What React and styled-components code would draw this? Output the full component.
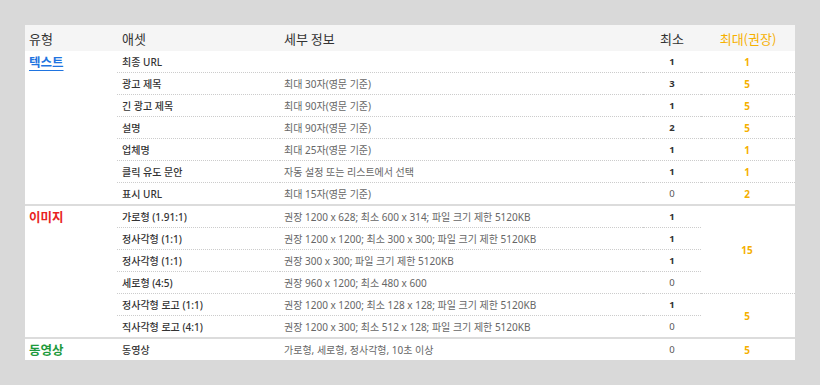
import React from "react";
import styled, { createGlobalStyle } from "styled-components";

const Global = createGlobalStyle`
  html, body { margin: 0; padding: 0; background: #d9d9d9; }
  body { font-family: "Noto Sans CJK KR", "Noto Sans", sans-serif; }
`;

const Page = styled.div`
  padding: 25px 25px 0 25px;
  width: 770px;
`;

const Table = styled.table`
  width: 770px;
  border-collapse: separate;
  border-spacing: 0;
  background: #fff;
  table-layout: fixed;
`;

const HeadCell = styled.th`
  height: 26px;
  padding: 0 0 0 ${(p) => p.$pl || 0}px;
  background: #f5f5f5;
  font-size: 13px;
  font-weight: 400;
  color: ${(p) => (p.$accent ? "#f5b000" : "#333")};
  text-align: ${(p) => (p.$center ? "center" : "left")};
  vertical-align: middle;
`;

const Section = styled.tbody`
  & > tr:first-child > td {
    border-top: ${(p) => (p.$first ? "none" : "2.5px solid #dcdcdc")};
  }
`;

const TypeCell = styled.td`
  vertical-align: top;
  padding: 0 0 0 4px;
  font-size: 12.5px;
  font-weight: 700;
  line-height: 21px;
  color: ${(p) => p.$color};
  text-decoration: ${(p) => (p.$underline ? "underline" : "none")};
  text-underline-offset: 3px;
`;

const Cell = styled.td`
  height: ${(p) => p.$h || 21}px;
  padding: 0 0 0 ${(p) => p.$pl || 0}px;
  font-family: "Noto Sans", "Noto Sans CJK KR", sans-serif;
  font-size: 10px;
  white-space: nowrap;
  vertical-align: middle;
  border-bottom: ${(p) => (p.$last ? "none" : "1px dotted #cccccc")};
`;

const Asset = styled(Cell)`
  color: #333;
  font-weight: 500;
`;

const Detail = styled(Cell)`
  color: #666;
`;

const Min = styled(Cell)`
  text-align: center;
  font-size: 9.5px;
  color: ${(p) => (p.$zero ? "#555" : "#333")};
  font-weight: ${(p) => (p.$zero ? 400 : 700)};
`;

const Max = styled(Cell)`
  text-align: center;
  color: #f5b000;
  font-weight: 700;
  padding-right: 2px;
`;

const textRows = [
  ["최종 URL", "", "1", "1"],
  ["광고 제목", "최대 30자(영문 기준)", "3", "5"],
  ["긴 광고 제목", "최대 90자(영문 기준)", "1", "5"],
  ["설명", "최대 90자(영문 기준)", "2", "5"],
  ["업체명", "최대 25자(영문 기준)", "1", "1"],
  ["클릭 유도 문안", "자동 설정 또는 리스트에서 선택", "1", "1"],
  ["표시 URL", "최대 15자(영문 기준)", "0", "2"],
];

const imageRows = [
  ["가로형 (1.91:1)", "권장 1200 x 628; 최소 600 x 314; 파일 크기 제한 5120KB", "1"],
  ["정사각형 (1:1)", "권장 1200 x 1200; 최소 300 x 300; 파일 크기 제한 5120KB", "1"],
  ["정사각형 (1:1)", "권장 300 x 300; 파일 크기 제한 5120KB", "1"],
  ["세로형 (4:5)", "권장 960 x 1200; 최소 480 x 600", "0"],
  ["정사각형 로고 (1:1)", "권장 1200 x 1200; 최소 128 x 128; 파일 크기 제한 5120KB", "1"],
  ["직사각형 로고 (4:1)", "권장 1200 x 300; 최소 512 x 128; 파일 크기 제한 5120KB", "0"],
];

export default function App() {
  return (
    <>
      <Global />
      <Page>
        <Table>
          <colgroup>
            <col style={{ width: 92 }} />
            <col style={{ width: 163 }} />
            <col style={{ width: 363 }} />
            <col style={{ width: 58 }} />
            <col style={{ width: 94 }} />
          </colgroup>
          <thead>
            <tr>
              <HeadCell $pl={4}>유형</HeadCell>
              <HeadCell $pl={5}>애셋</HeadCell>
              <HeadCell $pl={4}>세부 정보</HeadCell>
              <HeadCell $center>최소</HeadCell>
              <HeadCell $center $accent>최대(권장)</HeadCell>
            </tr>
          </thead>
          <Section $first>
            {textRows.map((r, i) => {
              const last = i === textRows.length - 1;
              return (
                <tr key={i}>
                  {i === 0 && (
                    <TypeCell rowSpan={textRows.length} $color="#1f74e0" $underline>
                      텍스트
                    </TypeCell>
                  )}
                  <Asset $pl={5} $last={last}>{r[0]}</Asset>
                  <Detail $pl={4} $last={last}>{r[1]}</Detail>
                  <Min $last={last} $zero={r[2] === "0"}>{r[2]}</Min>
                  <Max $last={last}>{r[3]}</Max>
                </tr>
              );
            })}
          </Section>
          <Section>
            {imageRows.map((r, i) => {
              const last = i === imageRows.length - 1;
              return (
                <tr key={i}>
                  {i === 0 && (
                    <TypeCell rowSpan={imageRows.length} $color="#e8231f">
                      이미지
                    </TypeCell>
                  )}
                  <Asset $pl={5} $last={last}>{r[0]}</Asset>
                  <Detail $pl={4} $last={last}>{r[1]}</Detail>
                  <Min $last={last} $zero={r[2] === "0"}>{r[2]}</Min>
                  {i === 0 && <Max rowSpan={4}>15</Max>}
                  {i === 4 && <Max rowSpan={2} $last>5</Max>}
                </tr>
              );
            })}
          </Section>
          <Section>
            <tr>
              <TypeCell $color="#1e9a3c">동영상</TypeCell>
              <Asset $pl={5} $last $h={20}>동영상</Asset>
              <Detail $pl={4} $last $h={20}>가로형, 세로형, 정사각형, 10초 이상</Detail>
              <Min $last $zero $h={20}>0</Min>
              <Max $last $h={20}>5</Max>
            </tr>
          </Section>
        </Table>
      </Page>
    </>
  );
}
